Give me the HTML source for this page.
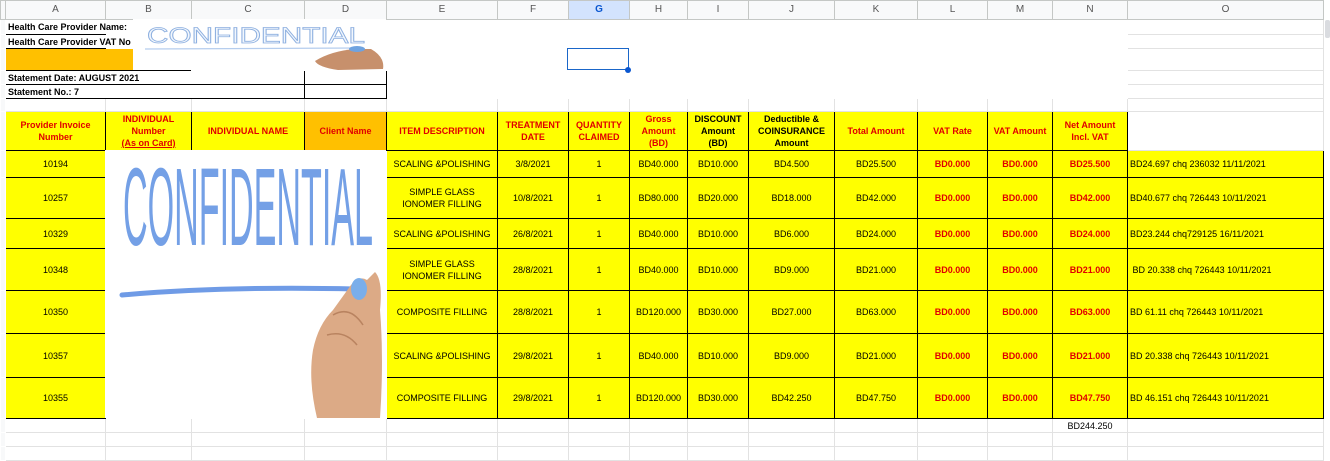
<!DOCTYPE html>
<html><head><meta charset="utf-8"><style>
*{margin:0;padding:0;box-sizing:border-box}
body{width:1330px;height:456px;overflow:hidden;background:#fff;font-family:"Liberation Sans",Arial,sans-serif;font-size:9px;color:#000;position:relative}
table{border-collapse:collapse;table-layout:fixed;position:absolute;left:0;top:0;width:1330px}
td{border:1px solid #e2e2e2;padding:0 1px;text-align:center;vertical-align:middle;white-space:nowrap;overflow:visible;line-height:12px}
tr.h td{background:#f8f9fa;color:#555;border-color:#c4c7c5;font-size:10px}
tr.h td.sel{background:#d3e3fd;color:#0b57d0;font-weight:bold}
.b{border:1px solid #000}
.y{background:#ffff00}
.o{background:#ffc000}
.r{color:#e00000;font-weight:bold}
.k{font-weight:bold}
.l{text-align:left;padding-left:2px}
.w{white-space:normal}
.nb{border-color:#fff}
</style></head><body>
<table>
<colgroup>
<col style="width:5px"><col style="width:100px"><col style="width:86px"><col style="width:113px"><col style="width:82px"><col style="width:111px"><col style="width:71px"><col style="width:61px"><col style="width:58px"><col style="width:61px"><col style="width:86px"><col style="width:83px"><col style="width:70px"><col style="width:65px"><col style="width:75px"><col style="width:196px"><col style="width:7px">
</colgroup>
<tr class="h" style="height:19px"><td></td><td>A</td><td>B</td><td>C</td><td>D</td><td>E</td><td>F</td><td class="sel">G</td><td>H</td><td>I</td><td>J</td><td>K</td><td>L</td><td>M</td><td>N</td><td>O</td><td style="background:#fff;border-color:#fff"></td></tr>
<tr style="height:15px"><td class="nb" style="background:#f8f9fa"></td><td class="k l" style="border:none;border-bottom:1px solid #000">Health Care Provider Name:</td><td class="nb"></td><td class="nb"></td><td class="nb"></td><td class="nb"></td><td class="nb"></td><td class="nb"></td><td class="nb"></td><td class="nb"></td><td class="nb"></td><td class="nb"></td><td class="nb"></td><td class="nb"></td><td class="nb"></td><td></td><td class="nb"></td></tr>
<tr style="height:14px"><td class="nb" style="background:#f8f9fa"></td><td class="k l" style="border:none;border-bottom:1px solid #000">Health Care Provider VAT No</td><td class="nb"></td><td class="nb"></td><td class="nb"></td><td class="nb"></td><td class="nb"></td><td class="nb"></td><td class="nb"></td><td class="nb"></td><td class="nb"></td><td class="nb"></td><td class="nb"></td><td class="nb"></td><td class="nb"></td><td></td><td class="nb"></td></tr>
<tr style="height:22px"><td class="nb" style="background:#f8f9fa"></td><td class="o" colspan="2" style="border:none"></td><td class="nb"></td><td class="nb"></td><td class="nb"></td><td class="nb"></td><td class="nb"></td><td class="nb"></td><td class="nb"></td><td class="nb"></td><td class="nb"></td><td class="nb"></td><td class="nb"></td><td class="nb"></td><td></td><td class="nb"></td></tr>
<tr style="height:14px"><td class="nb" style="background:#f8f9fa"></td><td class="k l b" colspan="3">Statement Date: AUGUST 2021</td><td class="b"></td><td class="nb"></td><td class="nb"></td><td class="nb"></td><td class="nb"></td><td class="nb"></td><td class="nb"></td><td class="nb"></td><td class="nb"></td><td class="nb"></td><td class="nb"></td><td></td><td class="nb"></td></tr>
<tr style="height:14px"><td class="nb" style="background:#f8f9fa"></td><td class="k l b" colspan="3">Statement No.: 7</td><td class="b"></td><td class="nb"></td><td class="nb"></td><td class="nb"></td><td class="nb"></td><td class="nb"></td><td class="nb"></td><td class="nb"></td><td class="nb"></td><td class="nb"></td><td class="nb"></td><td></td><td class="nb"></td></tr>
<tr style="height:13px"><td class="nb" style="background:#f8f9fa"></td><td></td><td></td><td></td><td></td><td></td><td></td><td></td><td></td><td></td><td></td><td></td><td></td><td></td><td></td><td></td><td class="nb"></td></tr>
<tr style="height:39px"><td class="nb" style="background:#f8f9fa"></td>
<td class="b y r w">Provider Invoice Number</td>
<td class="b y r w">INDIVIDUAL<br>Number<br><u>(As on Card)</u></td>
<td class="b y r">INDIVIDUAL NAME</td>
<td class="b o r">Client Name</td>
<td class="b y r">ITEM DESCRIPTION</td>
<td class="b y r w">TREATMENT DATE</td>
<td class="b y r w">QUANTITY CLAIMED</td>
<td class="b y r w">Gross<br>Amount<br>(BD)</td>
<td class="b y k w">DISCOUNT Amount<br>(BD)</td>
<td class="b y k w">Deductible &amp; COINSURANCE Amount</td>
<td class="b y r">Total Amount</td>
<td class="b y r">VAT Rate</td>
<td class="b y r">VAT Amount</td>
<td class="b y r w">Net Amount<br>Incl. VAT</td>
<td></td><td class="nb"></td></tr>

<tr style="height:27px"><td class="nb" style="background:#f8f9fa"></td><td class="b y">10194</td><td class="nb"></td><td class="nb"></td><td class="nb"></td><td class="b y">SCALING &amp;POLISHING</td><td class="b y">3/8/2021</td><td class="b y">1</td><td class="b y">BD40.000</td><td class="b y">BD10.000</td><td class="b y">BD4.500</td><td class="b y">BD25.500</td><td class="b y r">BD0.000</td><td class="b y r">BD0.000</td><td class="b y r">BD25.500</td><td class="b y l">BD24.697 chq 236032 11/11/2021</td><td class="nb"></td></tr>
<tr style="height:41px"><td class="nb" style="background:#f8f9fa"></td><td class="b y">10257</td><td class="nb"></td><td class="nb"></td><td class="nb"></td><td class="b y w">SIMPLE GLASS<br>IONOMER FILLING</td><td class="b y">10/8/2021</td><td class="b y">1</td><td class="b y">BD80.000</td><td class="b y">BD20.000</td><td class="b y">BD18.000</td><td class="b y">BD42.000</td><td class="b y r">BD0.000</td><td class="b y r">BD0.000</td><td class="b y r">BD42.000</td><td class="b y l">BD40.677 chq 726443 10/11/2021</td><td class="nb"></td></tr>
<tr style="height:30px"><td class="nb" style="background:#f8f9fa"></td><td class="b y">10329</td><td class="nb"></td><td class="nb"></td><td class="nb"></td><td class="b y">SCALING &amp;POLISHING</td><td class="b y">26/8/2021</td><td class="b y">1</td><td class="b y">BD40.000</td><td class="b y">BD10.000</td><td class="b y">BD6.000</td><td class="b y">BD24.000</td><td class="b y r">BD0.000</td><td class="b y r">BD0.000</td><td class="b y r">BD24.000</td><td class="b y l">BD23.244 chq729125 16/11/2021</td><td class="nb"></td></tr>
<tr style="height:42px"><td class="nb" style="background:#f8f9fa"></td><td class="b y">10348</td><td class="nb"></td><td class="nb"></td><td class="nb"></td><td class="b y w">SIMPLE GLASS<br>IONOMER FILLING</td><td class="b y">28/8/2021</td><td class="b y">1</td><td class="b y">BD40.000</td><td class="b y">BD10.000</td><td class="b y">BD9.000</td><td class="b y">BD21.000</td><td class="b y r">BD0.000</td><td class="b y r">BD0.000</td><td class="b y r">BD21.000</td><td class="b y l">&nbsp;BD 20.338 chq 726443 10/11/2021</td><td class="nb"></td></tr>
<tr style="height:43px"><td class="nb" style="background:#f8f9fa"></td><td class="b y">10350</td><td class="nb"></td><td class="nb"></td><td class="nb"></td><td class="b y">COMPOSITE FILLING</td><td class="b y">28/8/2021</td><td class="b y">1</td><td class="b y">BD120.000</td><td class="b y">BD30.000</td><td class="b y">BD27.000</td><td class="b y">BD63.000</td><td class="b y r">BD0.000</td><td class="b y r">BD0.000</td><td class="b y r">BD63.000</td><td class="b y l">BD 61.11 chq 726443 10/11/2021</td><td class="nb"></td></tr>
<tr style="height:44px"><td class="nb" style="background:#f8f9fa"></td><td class="b y">10357</td><td class="nb"></td><td class="nb"></td><td class="nb"></td><td class="b y">SCALING &amp;POLISHING</td><td class="b y">29/8/2021</td><td class="b y">1</td><td class="b y">BD40.000</td><td class="b y">BD10.000</td><td class="b y">BD9.000</td><td class="b y">BD21.000</td><td class="b y r">BD0.000</td><td class="b y r">BD0.000</td><td class="b y r">BD21.000</td><td class="b y l">BD 20.338 chq 726443 10/11/2021</td><td class="nb"></td></tr>
<tr style="height:41px"><td class="nb" style="background:#f8f9fa"></td><td class="b y">10355</td><td class="nb"></td><td class="nb"></td><td class="nb"></td><td class="b y">COMPOSITE FILLING</td><td class="b y">29/8/2021</td><td class="b y">1</td><td class="b y">BD120.000</td><td class="b y">BD30.000</td><td class="b y">BD42.250</td><td class="b y">BD47.750</td><td class="b y r">BD0.000</td><td class="b y r">BD0.000</td><td class="b y r">BD47.750</td><td class="b y l">BD 46.151 chq 726443 10/11/2021</td><td class="nb"></td></tr>
<tr style="height:14px"><td class="nb" style="background:#f8f9fa"></td><td></td><td></td><td></td><td></td><td></td><td></td><td></td><td></td><td></td><td></td><td></td><td></td><td></td><td>BD244.250</td><td></td><td class="nb"></td></tr>
<tr style="height:14px"><td class="nb" style="background:#f8f9fa"></td><td></td><td></td><td></td><td></td><td></td><td></td><td></td><td></td><td></td><td></td><td></td><td></td><td></td><td></td><td></td><td class="nb"></td></tr>
<tr style="height:14px"><td class="nb" style="background:#f8f9fa"></td><td></td><td></td><td></td><td></td><td></td><td></td><td></td><td></td><td></td><td></td><td></td><td></td><td></td><td></td><td></td><td class="nb"></td></tr>
</table>

<div style="position:absolute;left:567px;top:48px;width:62px;height:22px;border:1px solid #1a66c9"></div>
<div style="position:absolute;left:625px;top:67px;width:6px;height:6px;border-radius:50%;background:#0b57d0"></div>
<div style="position:absolute;left:1325px;top:20px;width:5px;height:18px;background:#dadce0;border-radius:2px"></div>

<svg style="position:absolute;left:133px;top:19px" width="253" height="51" viewBox="0 0 253 51">
<rect width="253" height="51" fill="#fff"/>
<text x="14" y="24" font-family="Liberation Sans" font-size="22" textLength="218" lengthAdjust="spacingAndGlyphs" fill="#f2f7fd" stroke="#8eb0e0" stroke-width="0.8">CONFIDENTIAL</text>
<line x1="12" y1="30" x2="225" y2="29" stroke="#b5cdee" stroke-width="1.2"/>
<path d="M182 42 Q198 32 222 30 L238 30 Q252 38 250 50 L205 51 Q185 48 182 42Z" fill="#c7906c"/>
<ellipse cx="224" cy="30" rx="8" ry="3" fill="#6fa3e0"/>
</svg>

<svg style="position:absolute;left:105px;top:150px" width="281" height="268" viewBox="0 0 281 268">
<rect width="281" height="268" fill="#fff"/>
<text x="18" y="110" font-family="Liberation Sans Narrow, Liberation Sans" font-size="120" textLength="250" lengthAdjust="spacingAndGlyphs" fill="#74a0e6" transform="translate(0,-6) scale(1,0.92)">CONFIDENTIAL</text>
<path d="M17 145 Q120 136 250 139" stroke="#6f9be6" stroke-width="5" fill="none" stroke-linecap="round"/>
<path d="M212 268 Q203 230 208 200 Q213 175 228 160 L246 135 Q254 125 262 130 L270 122 Q278 130 275 160 Q279 210 275 268Z" fill="#dcaa86"/>
<path d="M228 165 Q245 155 258 175" stroke="#b98360" stroke-width="1.5" fill="none"/>
<path d="M222 185 Q240 180 252 195" stroke="#b98360" stroke-width="1.5" fill="none"/>
<ellipse cx="254" cy="139" rx="8" ry="11" fill="#7aaeea"/>
</svg>
</body></html>
